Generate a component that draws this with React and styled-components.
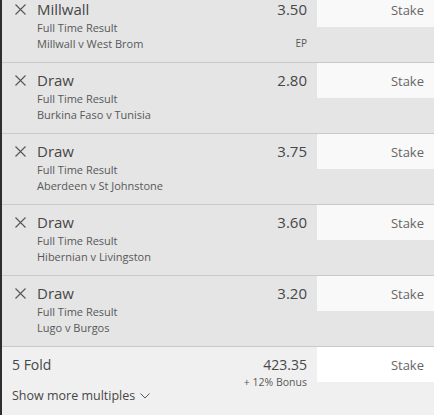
import React from "react";
import styled, { createGlobalStyle } from "styled-components";

const Global = createGlobalStyle`
  html, body { margin: 0; padding: 0; background: #f0f0f0; }
  body { font-family: "Open Sans", "Noto Sans", sans-serif; overflow: hidden; }
`;

const Slip = styled.div`
  width: 434px;
  height: 415px;
  overflow: hidden;
  border-left: 2px solid #2e2e2e;
  box-sizing: border-box;
  background: #f0f0f0;
`;

const List = styled.div`
  margin-top: -8px;
  display: flex;
  flex-direction: column;
`;

const Row = styled.div`
  display: flex;
  height: 70px;
  background: #e5e5e5;
  border-bottom: 1px solid #c9c9c9;
`;

const Info = styled.div`
  flex: 1;
  display: flex;
  padding-left: 12px;
  min-width: 0;
`;

const Remove = styled.button`
  width: 12px;
  height: 34px;
  padding: 0;
  margin-right: 11px;
  border: none;
  background: none;
  display: flex;
  align-items: center;
  justify-content: center;
  color: #555;
  cursor: pointer;
`;

const Texts = styled.div`
  display: flex;
  flex-direction: column;
`;

const Title = styled.div`
  font-size: 15px;
  line-height: 22px;
  padding-top: 6px;
  color: #474747;
`;

const Sub = styled.div`
  font-size: 11px;
  line-height: 16px;
  color: #585858;
  white-space: nowrap;
`;

const OddsCol = styled.div`
  width: 80px;
  margin-right: 10px;
  display: flex;
  flex-direction: column;
  align-items: flex-end;
`;

const Odds = styled.div`
  font-size: 15px;
  line-height: 22px;
  padding-top: 6px;
  color: #474747;
`;

const Note = styled.div`
  font-size: 10px;
  line-height: 16px;
  margin-top: 15px;
  color: #585858;
`;

const StakeBox = styled.div`
  width: 117px;
  height: 35px;
  box-sizing: border-box;
  background: ${(p) => (p.$bright ? "#ffffff" : "#f9f9f9")};
  display: flex;
  align-items: center;
  justify-content: flex-end;
  padding-right: 10px;
  font-size: 13px;
  color: #666;
`;

const Footer = styled.div`
  height: 69px;
  background: #f0f0f0;
  display: flex;
  flex-direction: column;
`;

const FoldRow = styled.div`
  display: flex;
`;

const FoldName = styled.div`
  flex: 1;
  padding-left: 10px;
  font-size: 14px;
  line-height: 22px;
  padding-top: 7px;
  color: #474747;
`;

const FoldOdds = styled.div`
  width: 80px;
  margin-right: 10px;
  display: flex;
  flex-direction: column;
  align-items: flex-end;
  padding-top: 7px;
`;

const FoldPrice = styled.div`
  font-size: 14px;
  line-height: 22px;
  color: #474747;
`;

const Bonus = styled.div`
  font-size: 10.5px;
  line-height: 12px;
  color: #585858;
  white-space: nowrap;
`;

const More = styled.div`
  padding-left: 10px;
  font-size: 12.5px;
  line-height: 20px;
  margin-top: -2px;
  color: #474747;
  display: flex;
  align-items: center;
  gap: 5px;
`;

const Cross = () => (
  <svg width="11" height="11" viewBox="0 0 11 11">
    <path d="M0.5 0.5 L10.5 10.5 M10.5 0.5 L0.5 10.5" stroke="currentColor" strokeWidth="1.1" fill="none" />
  </svg>
);

const Chevron = () => (
  <svg width="10" height="6" viewBox="0 0 10 6">
    <path d="M0.5 0.5 L5 5 L9.5 0.5" stroke="#555" strokeWidth="1" fill="none" />
  </svg>
);

const bets = [
  { sel: "Millwall", event: "Millwall v West Brom", odds: "3.50", ep: true },
  { sel: "Draw", event: "Burkina Faso v Tunisia", odds: "2.80" },
  { sel: "Draw", event: "Aberdeen v St Johnstone", odds: "3.75" },
  { sel: "Draw", event: "Hibernian v Livingston", odds: "3.60" },
  { sel: "Draw", event: "Lugo v Burgos", odds: "3.20" },
];

export default function App() {
  return (
    <Slip>
      <Global />
      <List>
        {bets.map((b, i) => (
          <Row key={i}>
            <Info>
              <Remove aria-label="Remove">
                <Cross />
              </Remove>
              <Texts>
                <Title>{b.sel}</Title>
                <Sub>Full Time Result</Sub>
                <Sub>{b.event}</Sub>
              </Texts>
            </Info>
            <OddsCol>
              <Odds>{b.odds}</Odds>
              {b.ep && <Note>EP</Note>}
            </OddsCol>
            <StakeBox>Stake</StakeBox>
          </Row>
        ))}
      </List>
      <Footer>
        <FoldRow>
          <FoldName>5 Fold</FoldName>
          <FoldOdds>
            <FoldPrice>423.35</FoldPrice>
            <Bonus>+ 12% Bonus</Bonus>
          </FoldOdds>
          <StakeBox $bright>Stake</StakeBox>
        </FoldRow>
        <More>
          Show more multiples <Chevron />
        </More>
      </Footer>
    </Slip>
  );
}
